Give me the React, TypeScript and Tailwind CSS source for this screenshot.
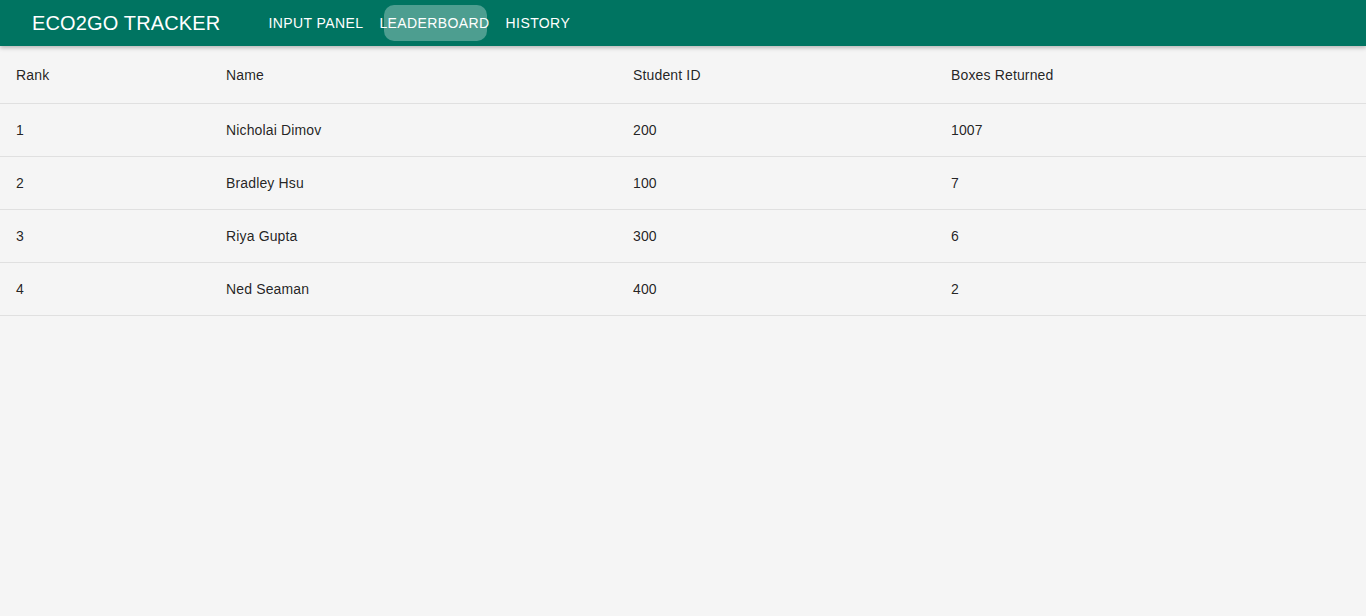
import React from 'react';

interface Entry {
  rank: number;
  name: string;
  studentId: string;
  boxes: number;
}

const leaderboard: Entry[] = [
  { rank: 1, name: 'Nicholai Dimov', studentId: '200', boxes: 1007 },
  { rank: 2, name: 'Bradley Hsu', studentId: '100', boxes: 7 },
  { rank: 3, name: 'Riya Gupta', studentId: '300', boxes: 6 },
  { rank: 4, name: 'Ned Seaman', studentId: '400', boxes: 2 },
];

const navItems = ['Input Panel', 'Leaderboard', 'History'];

const App = () => {
  return (
    <div className="min-h-screen bg-[#f5f5f5] font-['Liberation_Sans',Arial,sans-serif] text-[rgba(0,0,0,0.87)]">
      <header className="relative z-10 flex h-[46px] items-center bg-[#007461] pl-8 text-white shadow-[0_2px_4px_rgba(0,0,0,0.25)]">
        <h1 className="text-[20px] leading-none tracking-[0.15px]">ECO2GO TRACKER</h1>
        <nav className="ml-[48px] flex items-center gap-4">
          {navItems.map((item) => (
            <div key={item} className="relative flex h-[46px] items-center">
              {item === 'Leaderboard' && (
                <span className="absolute left-[5px] right-[3px] top-[5px] bottom-[5px] rounded-[10px] bg-white/30" />
              )}
              <span className="relative text-[14px] uppercase leading-none tracking-[0.4px]">{item}</span>
            </div>
          ))}
        </nav>
      </header>

      <table className="w-full table-fixed border-collapse text-left text-[14px] tracking-[0.15px]">
        <colgroup>
          <col className="w-[210px]" />
          <col className="w-[407px]" />
          <col className="w-[318px]" />
          <col />
        </colgroup>
        <thead>
          <tr className="h-[57px] border-b border-[#e0e0e0]">
            <th className="px-4 pt-[2px] font-normal">Rank</th>
            <th className="px-4 pt-[2px] font-normal">Name</th>
            <th className="px-4 pt-[2px] font-normal">Student ID</th>
            <th className="px-4 pt-[2px] font-normal">Boxes Returned</th>
          </tr>
        </thead>
        <tbody>
          {leaderboard.map((entry) => (
            <tr key={entry.rank} className="h-[53px] border-b border-[#e0e0e0]">
              <td className="px-4 pt-[2px]">{entry.rank}</td>
              <td className="px-4 pt-[2px]">{entry.name}</td>
              <td className="px-4 pt-[2px]">{entry.studentId}</td>
              <td className="px-4 pt-[2px]">{entry.boxes}</td>
            </tr>
          ))}
        </tbody>
      </table>
    </div>
  );
};

export default App;
